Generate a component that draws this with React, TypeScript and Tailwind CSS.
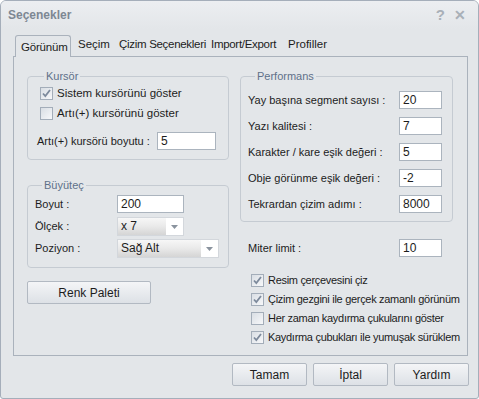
import React from "react";

const Check: React.FC<{ checked?: boolean; label: string }> = ({ checked, label }) => {
  return (
    <div className="flex items-center h-[19px] gap-[3px] whitespace-nowrap">
      <span className="w-[13px] h-[13px] shrink-0 border border-[#a3adb9] bg-gradient-to-br from-[#d9dee4] to-[#f7f8fa] flex items-center justify-center">
        {checked && (
          <svg width="11" height="11" viewBox="0 0 11 11">
            <path d="M2 5.5 L4.3 8 L9 2" fill="none" stroke="#7d8a9c" strokeWidth="1.8" />
          </svg>
        )}
      </span>
      <span className="pl-[1px]">{label}</span>
    </div>
  );
};

const Field: React.FC<{ value: string; w: string }> = ({ value, w }) => (
  <div className={`${w} h-[18px] bg-white border border-[#abb4be] pl-[3px] leading-[16px] text-[12px]`}>{value}</div>
);

const Combo: React.FC<{ value: string; w: string }> = ({ value, w }) => (
  <div className={`${w} h-[19px] flex border border-[#d3d7dc] leading-[17px] text-[12px]`}>
    <div className="flex-1 pl-[3px] bg-gradient-to-b from-[#f7f7f7] via-[#e9e9e9] to-[#d5d5d5]">{value}</div>
    <div className="w-[17px] bg-white flex items-center justify-center">
      <svg width="7" height="4" viewBox="0 0 7 4">
        <path d="M0 0 H7 L3.5 4 Z" fill="#8a939e" />
      </svg>
    </div>
  </div>
);

const Button: React.FC<{ label: string; w: string }> = ({ label, w }) => (
  <div className={`${w} h-[23px] rounded-[2px] border border-[#b2b9c2] bg-gradient-to-b from-[#f4f5f7] to-[#dde1e6] flex items-center justify-center text-[12px]`}>
    {label}
  </div>
);

const Group: React.FC<{ title: string; className: string; children: React.ReactNode }> = ({ title, className, children }) => (
  <fieldset className={`border border-[#c5cbd2] rounded-[4px] ${className}`}>
    <legend className="ml-[7px] px-[2px] leading-[14px] text-[#5f7189]">{title}</legend>
    {children}
  </fieldset>
);

export default function App() {
  return (
    <div className="w-[479px] h-[399px] bg-[#e3e6e9] border border-[#a5aeba] rounded-t-[6px] rounded-b-[3px] flex flex-col overflow-hidden font-['Liberation_Sans',Arial,sans-serif] text-[11px] text-[#1c1c1c] whitespace-nowrap">
      {/* title bar */}
      <div className="h-[28px] shrink-0 flex items-center justify-between pl-[7px] pr-[12px] bg-gradient-to-b from-[#eceef1] to-[#e3e6e9]">
        <span className="font-bold text-[12px] text-[#7d8793]">Seçenekler</span>
        <div className="flex items-center gap-[9px] text-[#a9b0b8] font-bold text-[15px]">
          <span>?</span>
          <span className="text-[14px]">✕</span>
        </div>
      </div>

      <div className="pl-[12px] pt-[6px]">
        {/* tabs */}
        <div className="flex items-end h-[22px] pl-[2px] text-[11.5px]">
          <div className="relative z-10 h-[22px] w-[56px] pl-[5px] pt-[3px] border border-b-0 border-[#aab2bc] rounded-t-[3px] bg-[#e3e6e9] tracking-[-0.2px]">
            Görünüm
          </div>
          <div className="w-[42px] pl-[7px] pb-[4px]">Seçim</div>
          <div className="w-[92px] pl-[6px] pb-[4px] tracking-[-0.3px]">Çizim Seçenekleri</div>
          <div className="w-[78px] pl-[6px] pb-[4px] tracking-[-0.3px]">Import/Export</div>
          <div className="pl-[5px] pb-[4px]">Profiller</div>
        </div>

        {/* panel */}
        <div className="-mt-px w-[455px] h-[300px] border border-[#aab2bc] flex gap-[11px] pl-[13px] pt-[12px]">
          {/* left column */}
          <div className="w-[202px] flex flex-col">
            <Group title="Kursör" className="h-[91px] px-[9px] pt-[1px]">
              <div className="ml-[3px] flex flex-col gap-[1px] text-[11.5px]">
                <Check checked label="Sistem kursörünü göster" />
                <Check label="Artı(+) kursörünü göster" />
              </div>
              <div className="flex items-center mt-[9px]">
                <span className="w-[120px]">Artı(+) kursörü boyutu :</span>
                <Field value="5" w="w-[59px]" />
              </div>
            </Group>

            <Group title="Büyüteç" className="mt-[18px] h-[90px] pl-[7px] pt-[3px]">
              <div className="flex items-center">
                <span className="w-[82px]">Boyut :</span>
                <Field value="200" w="w-[67px]" />
              </div>
              <div className="flex items-center mt-[4px]">
                <span className="w-[82px]">Ölçek :</span>
                <Combo value="x 7" w="w-[67px]" />
              </div>
              <div className="flex items-center mt-[3px]">
                <span className="w-[82px]">Poziyon :</span>
                <Combo value="Sağ Alt" w="w-[102px]" />
              </div>
            </Group>

            <div className="mt-[13px]">
              <Button label="Renk Paleti" w="w-[124px]" />
            </div>
          </div>

          {/* right column */}
          <div className="w-[213px] flex flex-col">
            <Group title="Performans" className="h-[153px] pl-[7px] pt-[8px]">
              <div className="flex flex-col gap-[8px]">
                {[
                  ["Yay başına segment sayısı :", "20"],
                  ["Yazı kalitesi :", "7"],
                  ["Karakter / kare eşik değeri :", "5"],
                  ["Obje görünme eşik değeri :", "-2"],
                  ["Tekrardan çizim adımı :", "8000"],
                ].map(([l, v]) => (
                  <div key={l} className="flex items-center">
                    <span className="w-[151px]">{l}</span>
                    <Field value={v} w="w-[43px]" />
                  </div>
                ))}
              </div>
            </Group>

            <div className="flex items-center mt-[17px] pl-[8px]">
              <span className="w-[151px]">Miter limit :</span>
              <Field value="10" w="w-[43px]" />
            </div>

            <div className="mt-[14px] ml-[11px] flex flex-col tracking-[-0.3px]">
              <Check checked label="Resim çerçevesini çiz" />
              <Check checked label="Çizim gezgini ile gerçek zamanlı görünüm" />
              <Check label="Her zaman kaydırma çukularını göster" />
              <Check checked label="Kaydırma çubukları ile yumuşak sürüklem" />
            </div>
          </div>
        </div>

        {/* bottom buttons */}
        <div className="w-[456px] flex justify-end gap-[6px] mt-[7px]">
          <Button label="Tamam" w="w-[75px]" />
          <Button label="İptal" w="w-[75px]" />
          <Button label="Yardım" w="w-[75px]" />
        </div>
      </div>
    </div>
  );
}
